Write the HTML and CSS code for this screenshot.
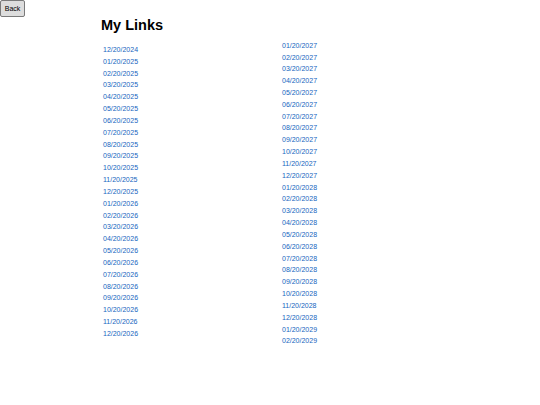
FILE: index.html
```html
<!DOCTYPE html>
<html>
<head>
<meta charset="utf-8">
<link rel="stylesheet" href="styles.css">
</head>
<body>
<button class="back">Back</button>
<div class="page">
  <h1 class="title">My Links</h1>
  <div class="cols">
    <div class="col col-left">
      <a href="#">12/20/2024</a>
      <a href="#">01/20/2025</a>
      <a href="#">02/20/2025</a>
      <a href="#">03/20/2025</a>
      <a href="#">04/20/2025</a>
      <a href="#">05/20/2025</a>
      <a href="#">06/20/2025</a>
      <a href="#">07/20/2025</a>
      <a href="#">08/20/2025</a>
      <a href="#">09/20/2025</a>
      <a href="#">10/20/2025</a>
      <a href="#">11/20/2025</a>
      <a href="#">12/20/2025</a>
      <a href="#">01/20/2026</a>
      <a href="#">02/20/2026</a>
      <a href="#">03/20/2026</a>
      <a href="#">04/20/2026</a>
      <a href="#">05/20/2026</a>
      <a href="#">06/20/2026</a>
      <a href="#">07/20/2026</a>
      <a href="#">08/20/2026</a>
      <a href="#">09/20/2026</a>
      <a href="#">10/20/2026</a>
      <a href="#">11/20/2026</a>
      <a href="#">12/20/2026</a>
    </div>
    <div class="col col-right">
      <a href="#">01/20/2027</a>
      <a href="#">02/20/2027</a>
      <a href="#">03/20/2027</a>
      <a href="#">04/20/2027</a>
      <a href="#">05/20/2027</a>
      <a href="#">06/20/2027</a>
      <a href="#">07/20/2027</a>
      <a href="#">08/20/2027</a>
      <a href="#">09/20/2027</a>
      <a href="#">10/20/2027</a>
      <a href="#">11/20/2027</a>
      <a href="#">12/20/2027</a>
      <a href="#">01/20/2028</a>
      <a href="#">02/20/2028</a>
      <a href="#">03/20/2028</a>
      <a href="#">04/20/2028</a>
      <a href="#">05/20/2028</a>
      <a href="#">06/20/2028</a>
      <a href="#">07/20/2028</a>
      <a href="#">08/20/2028</a>
      <a href="#">09/20/2028</a>
      <a href="#">10/20/2028</a>
      <a href="#">11/20/2028</a>
      <a href="#">12/20/2028</a>
      <a href="#">01/20/2029</a>
      <a href="#">02/20/2029</a>
    </div>
  </div>
</div>
</body>
</html>
```

FILE: styles.css
```css
html, body {
  margin: 0;
  padding: 0;
  background: #ffffff;
  font-family: "Liberation Sans", Arial, sans-serif;
}

.back {
  display: block;
  margin: 0;
  width: 25px;
  height: 17px;
  padding: 0;
  font-family: "Liberation Sans", Arial, sans-serif;
  font-size: 7px;
  color: #000000;
  background: #dddddd;
  border: 1px solid #7a7a7a;
  border-radius: 2px;
}

.page {
  margin-left: 101px;
}

.title {
  margin: 0;
  font-size: 14.5px;
  line-height: 16px;
  font-weight: bold;
  color: #000000;
}

.cols {
  display: flex;
  align-items: flex-start;
  gap: 0;
}

.col {
  display: flex;
  flex-direction: column;
}

.col a {
  display: block;
  font-size: 7px;
  line-height: 11.83px;
  color: #1565c0;
  text-decoration: none;
}

.col-left {
  width: 179px;
  margin-top: 11px;
  padding-left: 2px;
}

.col-right {
  margin-top: 6.7px;
}
```
